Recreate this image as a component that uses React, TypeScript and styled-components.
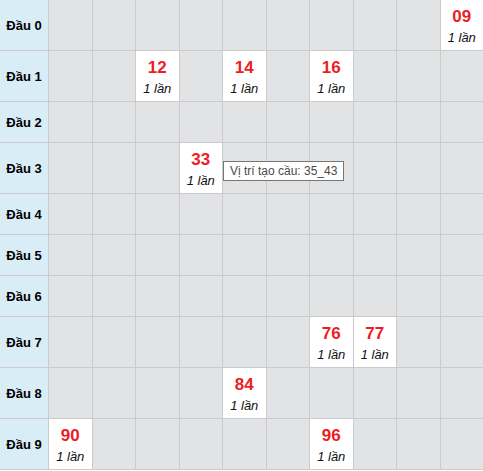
import React from 'react';
import styled, { createGlobalStyle } from 'styled-components';

type THit = { value: string; count: number; tip?: string };

// head -> column index -> hit
const rows: Record<number, Record<number, THit>> = {
  0: { 9: { value: '09', count: 1 } },
  1: {
    2: { value: '12', count: 1 },
    4: { value: '14', count: 1 },
    6: { value: '16', count: 1 },
  },
  2: {},
  3: { 3: { value: '33', count: 1, tip: 'Vị trí tạo cầu: 35_43' } },
  4: {},
  5: {},
  6: {},
  7: {
    6: { value: '76', count: 1 },
    7: { value: '77', count: 1 },
  },
  8: { 4: { value: '84', count: 1 } },
  9: {
    0: { value: '90', count: 1 },
    6: { value: '96', count: 1 },
  },
};

const heads = Array.from({ length: 10 }, (_, i) => i);
const columns = Array.from({ length: 10 }, (_, i) => i);

const App = () => {
  const heights = heads.map((h) =>
    Object.keys(rows[h]).length > 0 ? '50px' : '40px'
  );

  return (
    <>
      <GlobalStyle />
      <Board style={{ gridTemplateRows: heights.join(' ') }}>
        {heads.map((head) => (
          <React.Fragment key={head}>
            <HeadCell>Đầu {head}</HeadCell>
            {columns.map((col) => {
              const hit = rows[head][col];
              if (!hit) return <Cell key={col} />;
              return (
                <Cell key={col} $filled>
                  <Value>{hit.value}</Value>
                  <Count>{hit.count} lần</Count>
                  {hit.tip && <Tooltip>{hit.tip}</Tooltip>}
                </Cell>
              );
            })}
          </React.Fragment>
        ))}
      </Board>
    </>
  );
};

export default App;

const GlobalStyle = createGlobalStyle`
  html, body {
    margin: 0;
    padding: 0;
    background: #fff;
  }
  body {
    font-family: "Liberation Sans", Arial, sans-serif;
  }
`;

const Board = styled.div`
  display: grid;
  grid-template-columns: 48px repeat(10, 1fr);
  column-gap: 1px;
  row-gap: 1px;
  width: 483px;
  background: #cbcbcb;
  border-bottom: 1px solid #cbcbcb;
`;

const HeadCell = styled.div`
  display: flex;
  align-items: center;
  justify-content: center;
  background: #d9edf7;
  color: #000;
  font-size: 13px;
  font-weight: bold;
  white-space: nowrap;
`;

const Cell = styled.div<{ $filled?: boolean }>`
  position: relative;
  display: flex;
  flex-direction: column;
  align-items: center;
  padding-top: 6px;
  background: ${({ $filled }) => ($filled ? '#fff' : '#e2e3e5')};
`;

const Value = styled.span`
  color: #ee1c25;
  font-size: 17px;
  font-weight: bold;
  line-height: 22px;
`;

const Count = styled.span`
  color: #111;
  font-size: 13px;
  font-style: italic;
  line-height: 20px;
  white-space: nowrap;
`;

const Tooltip = styled.div`
  position: absolute;
  left: calc(100% + 1px);
  top: 18px;
  z-index: 10;
  padding: 0 6px;
  background: #fff;
  border: 1px solid #767676;
  color: #4a4a4a;
  font-size: 12px;
  line-height: 18px;
  white-space: nowrap;
`;
